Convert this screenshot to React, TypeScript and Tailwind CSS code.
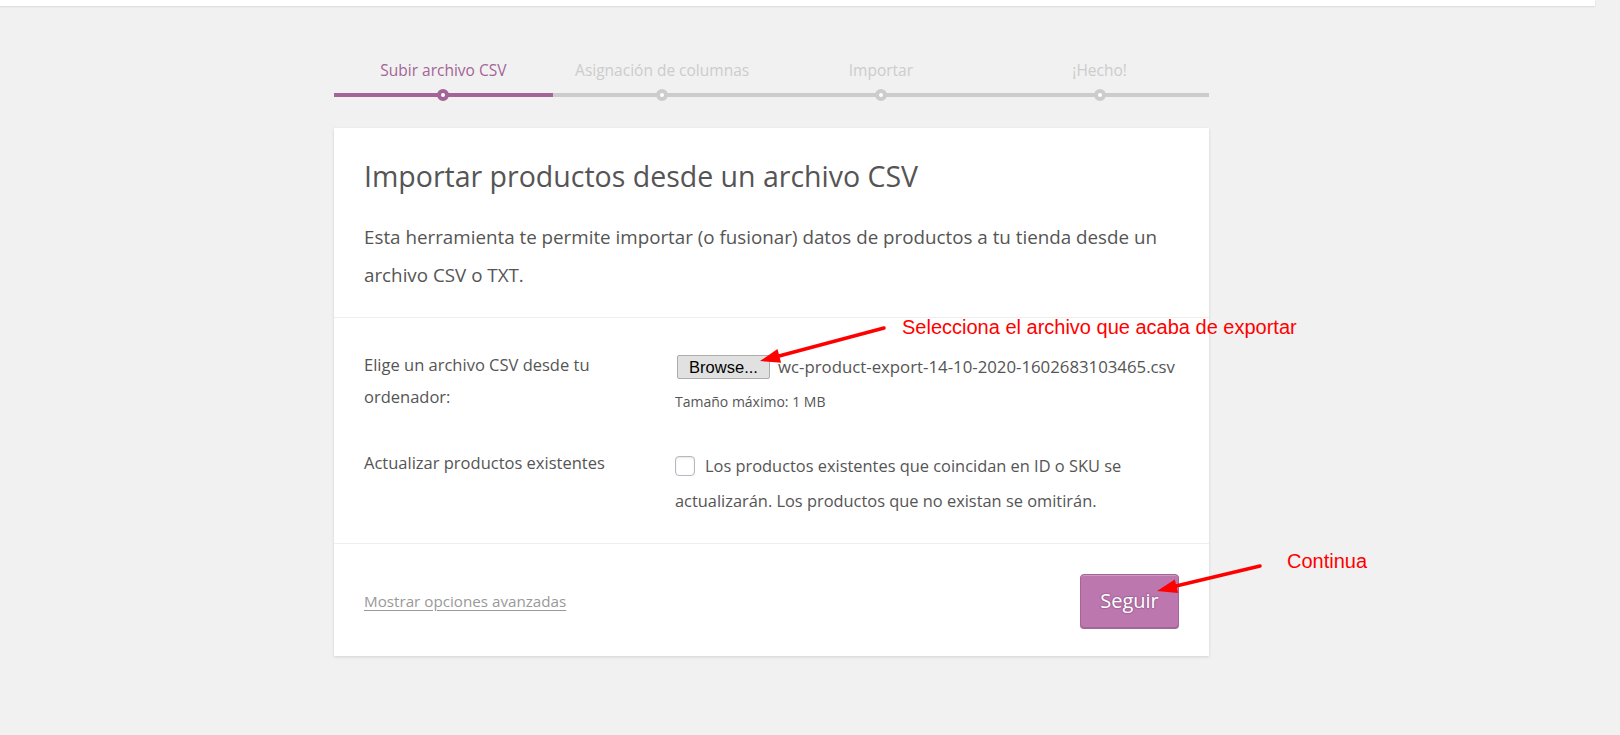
import React from 'react';

const steps = ['Subir archivo CSV', 'Asignación de columnas', 'Importar', '¡Hecho!'];

const ProgressSteps: React.FC = () => (
  <ol className="ml-[334px] mt-[53px] flex w-[875px]">
    {steps.map((step, i) => (
      <li
        key={step}
        className={`relative flex-1 border-b-4 pb-[12px] text-center text-[15.5px] leading-[22px] ${
          i === 0 ? 'border-[#a46497] text-[#a46497]' : 'border-[#ccc] text-[#ccc]'
        }`}
      >
        {step}
        <span
          className={`absolute left-1/2 -bottom-[8px] -ml-[6px] h-3 w-3 rounded-full border-4 bg-white ${
            i === 0 ? 'border-[#a46497]' : 'border-[#ccc]'
          }`}
        />
      </li>
    ))}
  </ol>
);

const Annotations: React.FC = () => (
  <>
    <svg className="pointer-events-none absolute left-0 top-0" width="1620" height="735">
      <line x1="884" y1="328" x2="779" y2="356" stroke="#f00" strokeWidth="3.5" strokeLinecap="round" />
      <polygon points="760,361 777.5,349.1 781.1,362.7" fill="#f00" />
      <line x1="1260" y1="566" x2="1176" y2="586" stroke="#f00" strokeWidth="3.5" strokeLinecap="round" />
      <polygon points="1157,591 1174.8,579.5 1178.1,593.1" fill="#f00" />
    </svg>
    <div className="absolute left-[902px] top-[317px] whitespace-nowrap font-['Liberation_Sans',Arial,sans-serif] text-[20px] leading-[20px] text-[#f00]">
      Selecciona el archivo que acaba de exportar
    </div>
    <div className="absolute left-[1287px] top-[551px] font-['Liberation_Sans',Arial,sans-serif] text-[20px] leading-[20px] text-[#f00]">
      Continua
    </div>
  </>
);

const App: React.FC = () => {
  return (
    <div className="relative h-[735px] w-full overflow-hidden bg-[#f1f1f1] font-['Open_Sans',sans-serif]">
      <div className="h-[6px] w-[1595px] bg-white shadow-[0_1px_2px_rgba(0,0,0,0.1)]" />

      <ProgressSteps />

      <div className="ml-[334px] mt-[31px] w-[875px] bg-white shadow-[0_1px_3px_rgba(0,0,0,0.13)]">
        <header className="border-b border-[#eee] px-[30px] pb-[23px] pt-[28px]">
          <h2 className="text-[28.5px] leading-[40px] text-[#555]">Importar productos desde un archivo CSV</h2>
          <p className="mt-[22px] text-[18.8px] leading-[38px] text-[#555]">
            Esta herramienta te permite importar (o fusionar) datos de productos a tu tienda desde un archivo CSV o TXT.
          </p>
        </header>

        <section className="border-b border-[#eee] px-[30px] pb-[25px] pt-[31px]">
          <div className="flex">
            <label className="w-[311px] shrink-0 pr-[60px] text-[16.5px] leading-[32px] text-[#555]">
              Elige un archivo CSV desde tu ordenador:
            </label>
            <div className="flex min-w-0 flex-1 flex-col">
              <div className="mt-[6px] flex items-center gap-[8px] pl-[2px]">
                <button className="flex h-[24px] w-[93px] shrink-0 items-center justify-center rounded-[2px] border border-[#adadad] bg-[#e1e1e1] font-['Liberation_Sans',Arial,sans-serif] text-[16.5px] text-black">
                  Browse...
                </button>
                <span className="whitespace-nowrap text-[16.8px] leading-[24px] text-[#555]">
                  wc-product-export-14-10-2020-1602683103465.csv
                </span>
              </div>
              <small className="mt-[13px] text-[14px] leading-[20px] text-[#555]">Tamaño máximo: 1 MB</small>
            </div>
          </div>

          <div className="mt-[34px] flex">
            <label className="w-[311px] shrink-0 pr-[40px] text-[16.5px] leading-[32px] text-[#555]">
              Actualizar productos existentes
            </label>
            <p className="flex-1 pt-[1px] text-[16.4px] leading-[35px] text-[#555]">
              <span className="mr-[10px] inline-block h-[20px] w-[20px] rounded-[4px] border border-[#b4b9be] bg-white align-[-4px] shadow-[inset_0_1px_2px_rgba(0,0,0,0.1)]" />
              Los productos existentes que coincidan en ID o SKU se actualizarán. Los productos que no existan se omitirán.
            </p>
          </div>
        </section>

        <footer className="flex items-center justify-between px-[30px] pb-[28px] pt-[30px]">
          <a href="#" className="text-[15.2px] text-[#999] underline underline-offset-[3px]">
            Mostrar opciones avanzadas
          </a>
          <button className="h-[54px] w-[99px] rounded-[4px] border border-[#a36597] bg-[#bb77ae] text-[20px] text-white shadow-[inset_0_1px_0_rgba(255,255,255,0.25),0_1px_0_#a36597] [text-shadow:0_-1px_1px_#a36597,1px_0_1px_#a36597,0_1px_1px_#a36597,-1px_0_1px_#a36597]">
            Seguir
          </button>
        </footer>
      </div>

      <Annotations />
    </div>
  );
};

export default App;
